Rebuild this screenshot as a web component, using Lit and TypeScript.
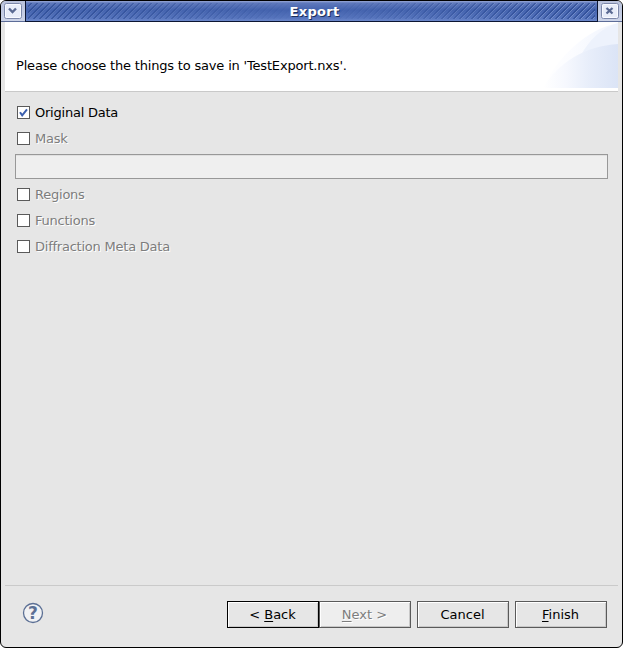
import { LitElement, html, css, svg } from "lit";
import { customElement, property } from "lit/decorators.js";
import { classMap } from "lit/directives/class-map.js";

@customElement("check-row")
class CheckRow extends LitElement {
  @property() label = "";
  @property({ type: Boolean }) checked = false;
  @property({ type: Boolean }) disabled = false;

  static styles = css`
    :host { display: block; }
    .row { display: flex; align-items: center; height: 26px; padding-left: 2px; gap: 5px; color: #000; letter-spacing: -0.23px; }
    .off { color: #7d7d7d; text-shadow: 1px 1px 0 #fff; }
    .box { box-sizing: border-box; width: 13px; height: 13px; border: 1px solid #5a5a5a; background: #fff; }
    svg { display: block; }
  `;

  render() {
    return html`<div class=${classMap({ row: true, off: this.disabled })}>
      <span class="box">${this.checked
        ? html`<svg width="11" height="11" viewBox="0 0 11 11"><path d="M2 5.2L4.2 8.4L9 2.4" fill="none" stroke="#3b5fae" stroke-width="2"/></svg>`
        : ""}</span>
      <span>${this.label}</span>
    </div>`;
  }
}

@customElement("dialog-button")
class DialogButton extends LitElement {
  @property({ type: Boolean }) disabled = false;
  @property({ type: Boolean }) focused = false;

  static styles = css`
    :host { display: block; }
    .btn {
      box-sizing: border-box; width: 92px; height: 27px; border: 1px solid #5a5a5a; padding-right: 1px;
      background: #e6e6e6; box-shadow: inset 1px 1px 0 #fff, inset -1px -1px 0 #c8c8c8;
      display: flex; align-items: center; justify-content: center; white-space: pre; line-height: 15px;
    }
    .focused { border-color: #000; }
    .off { background: #eee; color: #7d7d7d; text-shadow: 1px 1px 0 #fff; }
  `;

  render() {
    return html`<div class=${classMap({ btn: true, off: this.disabled, focused: this.focused })}><span><slot></slot></span></div>`;
  }
}

@customElement("app-root")
class AppRoot extends LitElement {
  static styles = css`
    :host { display: block; width: 623px; height: 648px; background: #fff; font: 13px/15px "DejaVu Sans", sans-serif; color: #000; }
    .window {
      box-sizing: border-box; height: 648px; border: 1px solid #000; border-radius: 6px;
      background: #e6e6e6; overflow: hidden; display: flex; flex-direction: column;
    }
    .title { display: flex; height: 21px; flex: none; }
    .corner {
      box-sizing: border-box; width: 24px; height: 21px; padding-top: 2px; display: flex; justify-content: center;
      background: linear-gradient(#b9c2dc, #ccd4e8); border-bottom: 1px solid #5d6d98;
    }
    .bar {
      flex: 1; box-sizing: border-box; border: solid #0c1633; border-width: 0 1px 1px; position: relative;
      background: linear-gradient(#9aa9d6 0, #5f79bc 2px, #4463ae 9px, #5674bd 17px, #6c88cb 20px);
      display: flex; justify-content: center; align-items: center;
    }
    .stripes {
      position: absolute; inset: 2px 2px 2px;
      background: repeating-linear-gradient(135deg, #1c3b8500 0 1.6px, #1c3b8580 2.2px 3.2px, #9bb0e080 3.8px 4.24px);
      -webkit-mask-image: linear-gradient(90deg, #000 0, #000 8%, #0000 48%, #0000 52%, #000 92%);
      mask-image: linear-gradient(90deg, #000 0, #000 8%, #0000 48%, #0000 52%, #000 92%);
    }
    .name { position: relative; padding-left: 6px; letter-spacing: 0.3px; color: #fff; font-weight: bold; text-shadow: 1px 1px 0 #1d2f5c; }
    .banner {
      margin: 0 4px; height: 69px; flex: none; background: #fff; border-bottom: 1px solid #c9c9c9;
      display: flex; justify-content: space-between;
    }
    .banner p { margin: 36px 0 0 11px; letter-spacing: -0.18px; }
    .art { display: block; }
    .content { flex: 1; padding: 7px 14px 0; }
    .field { box-sizing: border-box; height: 25px; margin: 3px 0 2px; border: 1px solid #989898; background: #efefef; box-shadow: inset 0 1px 0 #e0e0e0; }
    .footer {
      box-sizing: border-box; height: 62px; flex: none; margin: 0 4px; padding: 15px 11px 0 17px; border-top: 1px solid #cacaca;
      display: flex; justify-content: space-between; align-items: flex-start;
    }
    .help { display: block; margin-top: 1px; font: bold 17px "DejaVu Sans", sans-serif; }
    .buttons { display: flex; gap: 6px; }
    .pair { display: flex; }
    u { text-decoration: underline; text-underline-offset: 2px; text-decoration-thickness: 1px; }
    svg { display: block; }
  `;

  private corner(glyph: unknown) {
    return html`<div class="corner"><svg width="18" height="16" viewBox="0 0 18 16">
      <rect x=".5" y=".5" width="17" height="15" rx="2" fill="#e8edf9" stroke="#7c88aa"/>
      <rect x="1.5" y="1.5" width="15" height="13" rx="1" fill="none" stroke="#f8faff"/>${glyph}</svg></div>`;
  }

  render() {
    return html`<div class="window">
      <div class="title">
        ${this.corner(svg`<path d="M5 5.5L8.5 9L12 5.5" fill="none" stroke="#5a6a92" stroke-width="2.4"/>`)}
        <div class="bar"><div class="stripes"></div><span class="name">Export</span></div>
        ${this.corner(svg`<path d="M5.5 5L11.5 10.5M11.5 5L5.5 10.5" fill="none" stroke="#5a6a92" stroke-width="2.3"/>`)}
      </div>
      <div class="banner">
        <p>Please choose the things to save in 'TestExport.nxs'.</p>
        <svg class="art" width="75" height="66" viewBox="0 0 75 66">
          <defs>
            <linearGradient id="a"><stop offset="0" stop-color="#fff"/><stop offset=".4" stop-color="#fbfcff"/><stop offset="1" stop-color="#f0f4fd"/></linearGradient>
            <linearGradient id="b"><stop offset="0" stop-color="#fff"/><stop offset=".3" stop-color="#f6f8fe"/><stop offset=".6" stop-color="#e8eefa"/><stop offset="1" stop-color="#dbe4f6"/></linearGradient>
          </defs>
          <path d="M0 66C14 35 44 7 75 1V66Z" fill="url(#a)"/>
          <path d="M37 35C46 18 58 6 75 1V22C60 24 48 28 37 35Z" fill="#edf2fc"/>
          <path d="M0 66C15 40 43 24 75 22V66Z" fill="url(#b)"/>
        </svg>
      </div>
      <div class="content">
        <check-row label="Original Data" checked></check-row>
        <check-row label="Mask" disabled></check-row>
        <div class="field"></div>
        <check-row label="Regions" disabled></check-row>
        <check-row label="Functions" disabled></check-row>
        <check-row label="Diffraction Meta Data" disabled></check-row>
      </div>
      <div class="footer">
        <svg class="help" width="22" height="22" viewBox="0 0 22 22">
          <circle cx="11" cy="11" r="9.5" fill="#f1f2f4" stroke="#5c7095" stroke-width="1.3"/>
          <text x="11" y="17" text-anchor="middle" fill="#5c7095">?</text>
        </svg>
        <div class="buttons">
          <div class="pair">
            <dialog-button focused>&lt; <u>B</u>ack</dialog-button>
            <dialog-button disabled><u>N</u>ext &gt;</dialog-button>
          </div>
          <dialog-button>Cancel</dialog-button>
          <dialog-button><u>F</u>inish</dialog-button>
        </div>
      </div>
    </div>`;
  }
}
